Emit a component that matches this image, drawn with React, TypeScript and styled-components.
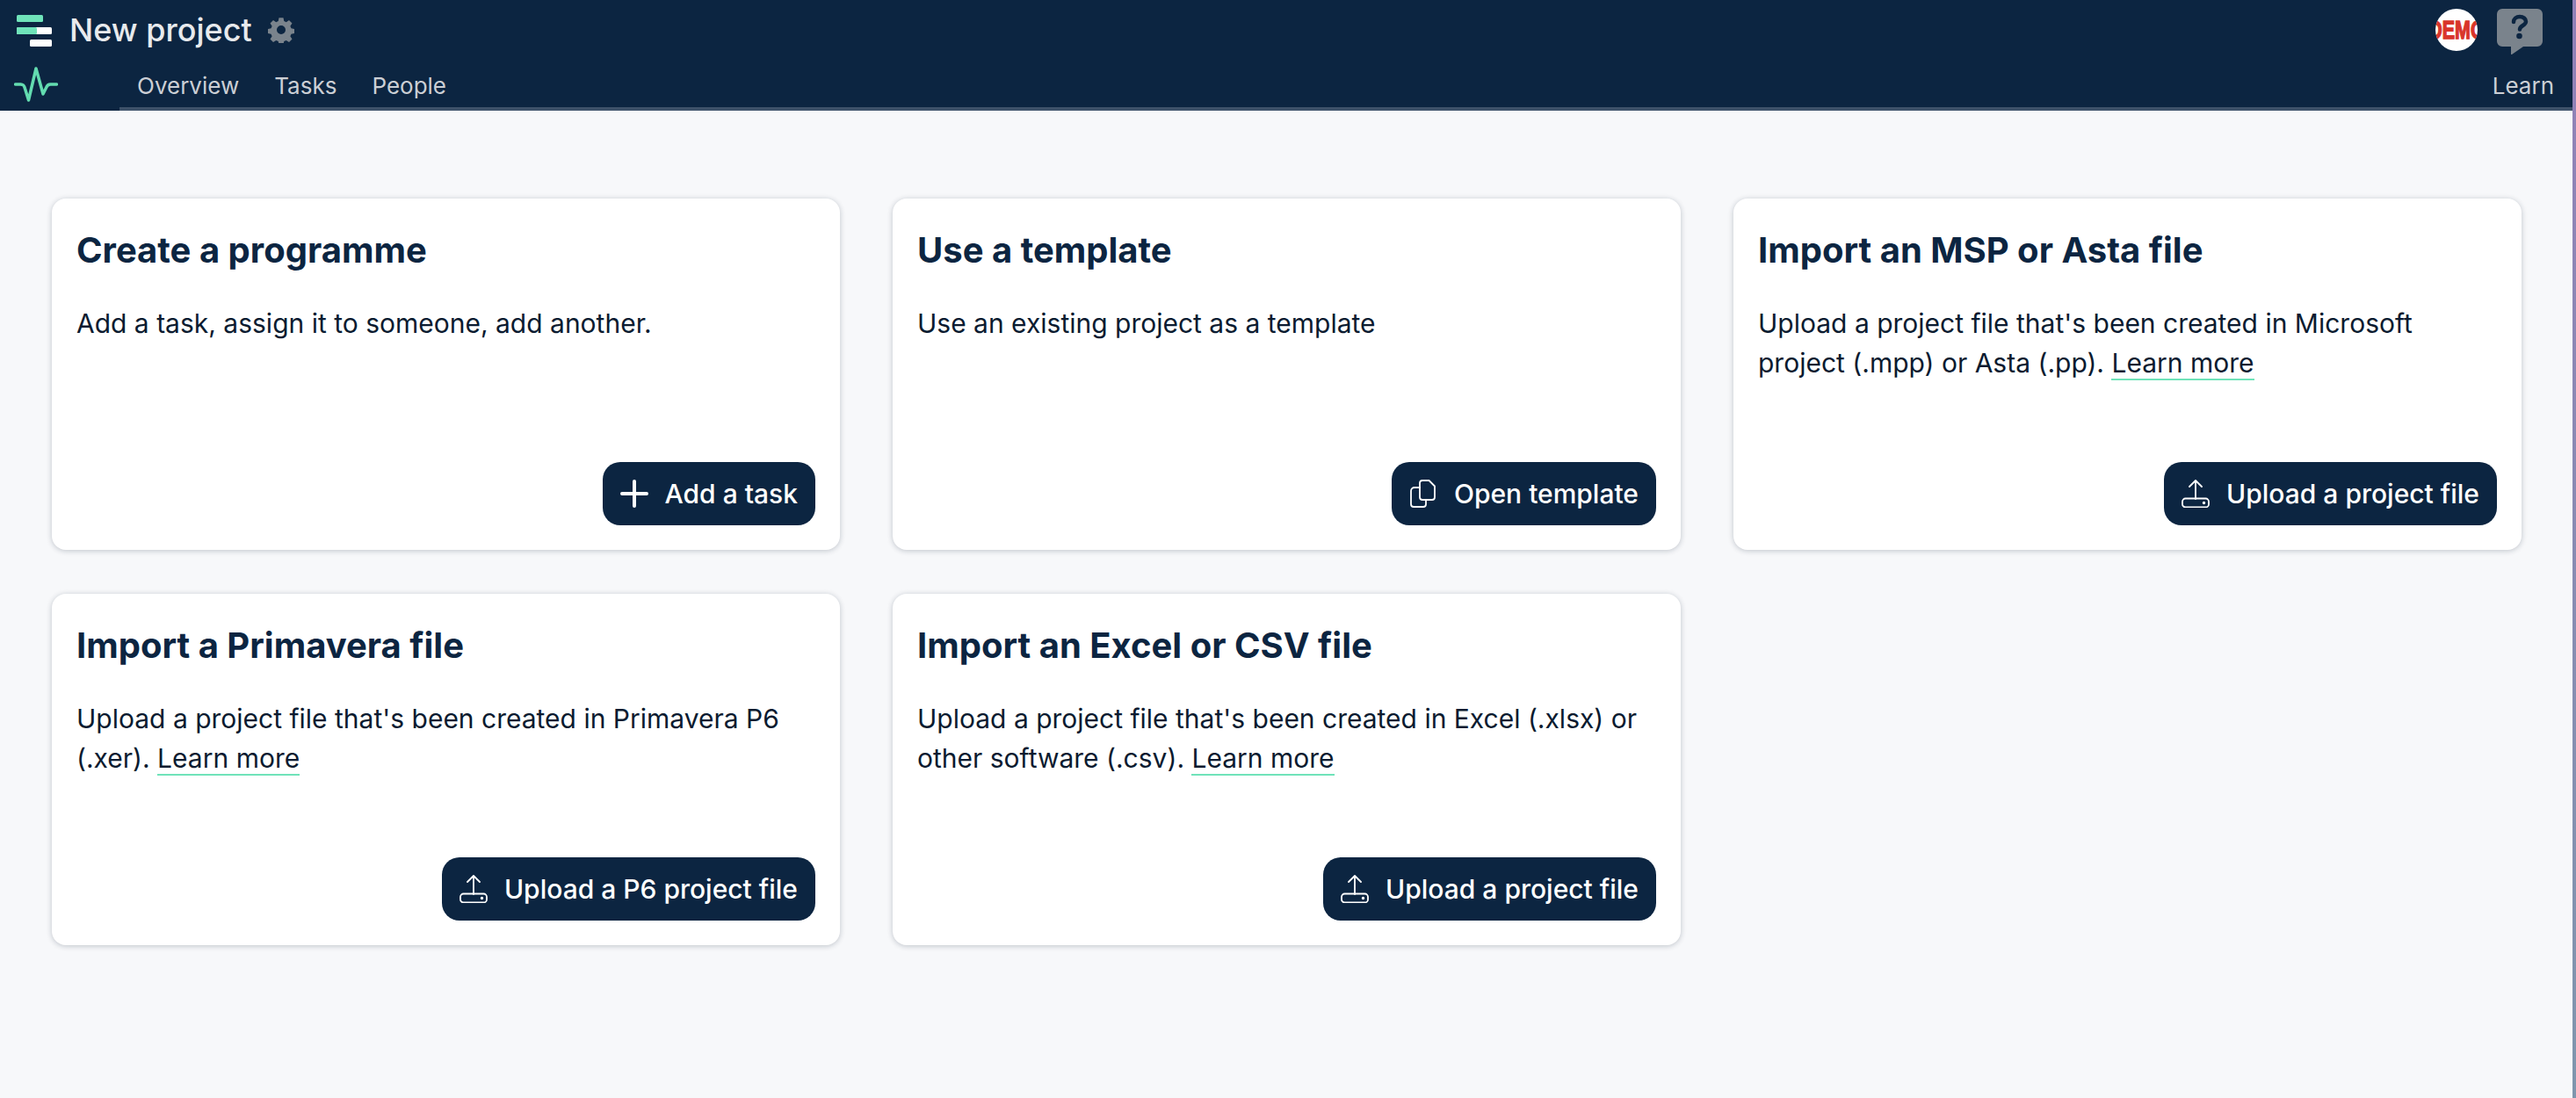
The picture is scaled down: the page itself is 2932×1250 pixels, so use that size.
import React from "react";
import styled, { createGlobalStyle } from "styled-components";

const Global = createGlobalStyle`
  html, body { margin: 0; padding: 0; height: 100%; background: #f7f8fa; }
  body { font-family: Inter, "Noto Sans", sans-serif; color: #0c2541; }
  * { box-sizing: border-box; }
`;
const Shell = styled.div`
  display: flex;
  width: 2932px;
  height: 1250px;
  overflow: hidden;
`;
const Main = styled.div`
  flex: 1;
  min-width: 0;
  display: flex;
  flex-direction: column;
`;
const EdgeLine = styled.div`
  width: 4px;
  flex: none;
  background: linear-gradient(#9280b8, #7f96ad);
`;
const Header = styled.header`
  height: 126px;
  flex: none;
  background: #0c2541;
  display: flex;
  flex-direction: column;
`;
const TopRow = styled.div`
  height: 70px;
  display: flex;
  align-items: center;
  padding: 0 34px 0 19px;
`;
const Title = styled.h1`
  margin: 0 0 2px 20px;
  font-size: 36px;
  line-height: 68px;
  font-weight: 500;
  color: #e8eaed;
`;
const Gear = styled.svg`
  width: 30px;
  height: 30px;
  margin: 0 0 2px 18px;
  fill: #7a838c;
`;
const Spacer = styled.div`
  flex: 1;
`;
const DemoBadge = styled.div`
  width: 48px;
  height: 48px;
  margin-bottom: 2px;
  border-radius: 50%;
  background: #fff;
  overflow: hidden;
  display: flex;
  align-items: center;
  justify-content: center;
`;
const DemoText = styled.span`
  flex: none;
  color: #d9352a;
  font-family: "Liberation Sans", sans-serif;
  font-weight: 700;
  font-size: 29px;
  line-height: 48px;
  -webkit-text-stroke: 1.4px #d9352a;
  transform: scaleX(0.74);
`;
const Help = styled.svg`
  width: 52px;
  height: 52px;
  margin: 2px 0 0 22px;
`;
const NavRow = styled.div`
  flex: 1;
  display: flex;
  align-items: stretch;
`;
const PulseCell = styled.div`
  width: 136px;
  padding: 6px 0 0 16px;
`;
const Tabs = styled.nav`
  flex: 1;
  display: flex;
  align-items: flex-start;
  padding: 8px 21px 0 20px;
  gap: 40px;
  border-bottom: 4px solid #3d5169;
`;
const Tab = styled.a`
  font-size: 26px;
  line-height: 40px;
  color: #cbcfd5;
  font-weight: 400;
`;
const Content = styled.main`
  flex: 1;
  padding: 100px 58px 0 59px;
  display: grid;
  grid-template-columns: repeat(3, 1fr);
  grid-auto-rows: 400px;
  column-gap: 60px;
  row-gap: 50px;
  align-content: start;
`;
const Card = styled.section`
  background: #fff;
  border-radius: 16px;
  box-shadow: 0 1px 6px rgba(12, 30, 50, 0.24);
  padding: 28px;
  display: flex;
  flex-direction: column;
`;
const CardTitle = styled.h2`
  margin: 0;
  font-size: 40px;
  line-height: 62px;
  font-weight: 700;
  color: #0c2541;
`;
const CardText = styled.p`
  margin: 30px 0 0;
  font-size: 30px;
  line-height: 45px;
  font-weight: 400;
  color: #0b1b30;
`;
const TextLink = styled.a`
  border-bottom: 2px solid #6fe3b9;
  color: #0b1b30;
`;
const Actions = styled.div`
  margin-top: auto;
  display: flex;
  justify-content: flex-end;
`;
const Button = styled.button`
  height: 72px;
  border: 0;
  border-radius: 20px;
  background: #0c2541;
  color: #fff;
  font: 550 30px Inter, sans-serif;
  display: flex;
  align-items: center;
  gap: 19px;
  padding: 0 20px;
`;
const BtnIcon = styled.svg`
  width: 32px;
  height: 32px;
  flex: none;
  fill: none;
  stroke: #fff;
  stroke-linecap: round;
  stroke-linejoin: round;
`;

const Logo = () => (
  <svg width="40" height="36" viewBox="0 0 40 36">
    <rect x="0" y="0" width="30" height="8" rx="1.500" fill="#6fe3b9" />
    <rect x="0" y="14" width="40" height="8" rx="1.500" fill="#fff" />
    <rect x="0" y="14" width="23" height="8" rx="1.500" fill="#6fe3b9" />
    <rect x="15" y="28" width="25" height="8" rx="1.500" fill="#fff" />
  </svg>
);
const Pulse = () => (
  <svg width="50" height="40" viewBox="0 0 50 40" fill="none" stroke="#63dcb0" strokeWidth="3.500" strokeLinecap="round" strokeLinejoin="round">
    <path d="M1.500 20h6c3 0 4 1 5 5l4 13 8.500-36 8 29 3.500-7c1-3 2.500-4 5-4h7" />
  </svg>
);
const UploadIcon = () => (
  <BtnIcon viewBox="0 0 32 32" strokeWidth="1.800">
    <path d="M16 22V1.500M9 8l7-7 7 7" />
    <rect x="1" y="21.500" width="30" height="10" rx="3.500" />
    <circle cx="25.500" cy="26.500" r="0.800" fill="#fff" />
  </BtnIcon>
);
const PlusIcon = () => (
  <BtnIcon viewBox="0 0 32 32" strokeWidth="4">
    <path d="M16 2v28M2 16h28" />
  </BtnIcon>
);
const CopyIcon = () => (
  <BtnIcon viewBox="0 0 32 32" strokeWidth="1.800">
    <path d="M12 4a3 3 0 0 1 3-3h7.500L29 7.500V20a3 3 0 0 1-3 3H15a3 3 0 0 1-3-3z" />
    <path d="M12 9H6a4 4 0 0 0-4 4v15a3 3 0 0 0 3 3h11a3 3 0 0 0 3-3v-5" />
  </BtnIcon>
);

type CardData = {
  title: string;
  text: React.ReactNode;
  action: string;
  icon: React.ReactNode;
};
const more = <TextLink>Learn more</TextLink>;
const cards: CardData[] = [
  { title: "Create a programme", text: "Add a task, assign it to someone, add another.", action: "Add a task", icon: <PlusIcon /> },
  { title: "Use a template", text: "Use an existing project as a template", action: "Open template", icon: <CopyIcon /> },
  { title: "Import an MSP or Asta file", text: <>Upload a project file that's been created in Microsoft project (.mpp) or Asta (.pp). {more}</>, action: "Upload a project file", icon: <UploadIcon /> },
  { title: "Import a Primavera file", text: <>Upload a project file that's been created in Primavera P6 (.xer). {more}</>, action: "Upload a P6 project file", icon: <UploadIcon /> },
  { title: "Import an Excel or CSV file", text: <>Upload a project file that's been created in Excel (.xlsx) or other software (.csv). {more}</>, action: "Upload a project file", icon: <UploadIcon /> },
];

export default function App() {
  return (
    <Shell>
      <Global />
      <Main>
        <Header>
          <TopRow>
            <Logo />
            <Title>New project</Title>
            <Gear viewBox="0 0 24 24">
              <path fillRule="evenodd" d="M10 1h4l.6 3 2 .9 2.600-1.700 2.800 2.800-1.700 2.600.9 2 3 .6v4l-3 .6-.9 2 1.700 2.600-2.800 2.800-2.600-1.700-2 .9-.6 3h-4l-.6-3-2-.9-2.600 1.700-2.800-2.800 1.700-2.600-.9-2-3-.6v-4l3-.6.9-2L2 6l2.800-2.800L7.400 4.900l2-.9zM12 8a4 4 0 1 0 0 8 4 4 0 0 0 0-8z" />
            </Gear>
            <Spacer />
            <DemoBadge>
              <DemoText>DEMO</DemoText>
            </DemoBadge>
            <Help viewBox="0 0 52 52">
              <path d="M6 0h40a6 6 0 0 1 6 6v31a6 6 0 0 1-6 6H30L17 52c-.5.3-1 0-1-.5V43H6a6 6 0 0 1-6-6V6a6 6 0 0 1 6-6z" fill="#7a838c" />
              <path d="M19 15c0-3.500 3-6 7-6s7 2.500 7 5.500c0 4.500-7 4.500-7 9" fill="none" stroke="#0c2541" strokeWidth="4.500" strokeLinecap="round" />
              <circle cx="25.500" cy="31" r="3.300" fill="#0c2541" />
            </Help>
          </TopRow>
          <NavRow>
            <PulseCell>
              <Pulse />
            </PulseCell>
            <Tabs>
              <Tab>Overview</Tab>
              <Tab>Tasks</Tab>
              <Tab>People</Tab>
              <Spacer />
              <Tab>Learn</Tab>
            </Tabs>
          </NavRow>
        </Header>
        <Content>
          {cards.map((c) => (
            <Card key={c.title}>
              <CardTitle>{c.title}</CardTitle>
              <CardText>{c.text}</CardText>
              <Actions>
                <Button>
                  {c.icon}
                  {c.action}
                </Button>
              </Actions>
            </Card>
          ))}
        </Content>
      </Main>
      <EdgeLine />
    </Shell>
  );
}
